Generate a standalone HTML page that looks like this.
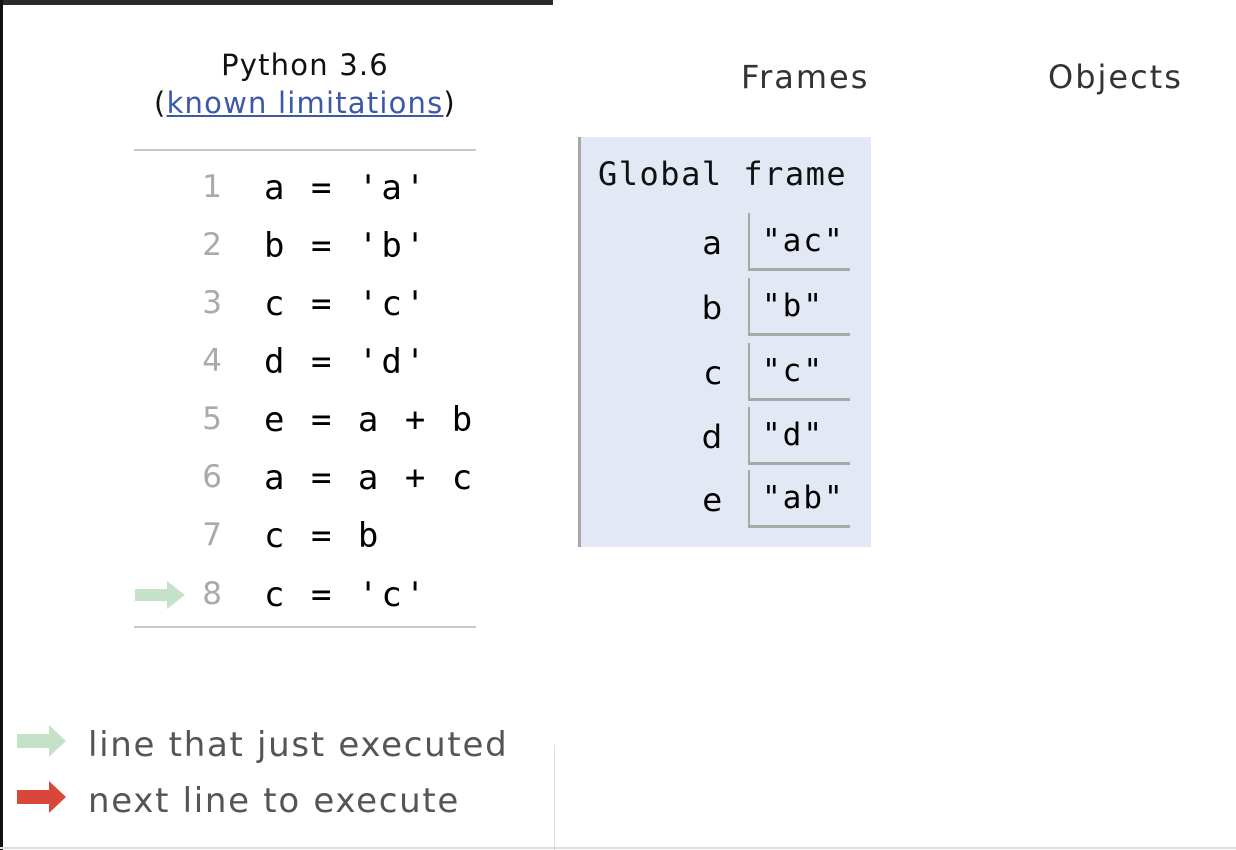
<!DOCTYPE html>
<html><head><meta charset="utf-8"><style>
body{margin:0;width:1236px;height:850px;background:#fff;position:relative;overflow:hidden;font-family:"DejaVu Sans","Liberation Sans",sans-serif}
.a{position:absolute;white-space:pre}
.mono{font-family:"DejaVu Sans Mono","Liberation Mono",monospace}
.ln{position:absolute;left:170px;width:52px;text-align:right;color:#aaa;font-size:31px;font-family:"DejaVu Sans",sans-serif}
.code{position:absolute;left:264px;font-size:34px;letter-spacing:3px;color:#000;font-family:"DejaVu Sans Mono",monospace}
.vn{position:absolute;left:660px;width:62px;text-align:right;font-size:32px;color:#000}
.vb{position:absolute;left:748px;width:102px;height:58px;border-left:2px solid #a8a8a8;border-bottom:3px solid #a8a8a8;box-sizing:border-box}
.vt{position:absolute;left:12px;top:10px;font-size:31px;letter-spacing:2px;font-family:"DejaVu Sans Mono",monospace}
</style></head><body>
<div class="a" style="left:0;top:0;width:553px;height:5px;background:#2a2a2a"></div>
<div class="a" style="left:0;top:0;width:3px;height:850px;background:#111"></div>
<div class="a" style="left:0;top:847px;width:1236px;height:2px;background:#ddd"></div>
<div class="a" style="left:554px;top:745px;width:1px;height:105px;background:#ddd"></div>

<div class="a" style="left:134px;width:342px;top:46px;text-align:center;font-size:29px;letter-spacing:1.2px;line-height:38px;color:#111">Python 3.6<br>(<span style="color:#3d58a7;text-decoration:underline">known limitations</span>)</div>
<div class="a" style="left:134px;top:149px;width:342px;height:2px;background:#c8c8c8"></div>
<div class="a" style="left:134px;top:626px;width:342px;height:2px;background:#c8c8c8"></div>

<div class="ln" style="top:169px">1</div><div class="code" style="top:168px">a = 'a'</div>
<div class="ln" style="top:227px">2</div><div class="code" style="top:226px">b = 'b'</div>
<div class="ln" style="top:285px">3</div><div class="code" style="top:284px">c = 'c'</div>
<div class="ln" style="top:343px">4</div><div class="code" style="top:342px">d = 'd'</div>
<div class="ln" style="top:401px">5</div><div class="code" style="top:400px">e = a + b</div>
<div class="ln" style="top:459px">6</div><div class="code" style="top:458px">a = a + c</div>
<div class="ln" style="top:517px">7</div><div class="code" style="top:516px">c = b</div>
<div class="ln" style="top:576px">8</div><div class="code" style="top:575px">c = 'c'</div>
<svg class="a" style="left:134px;top:581px" width="52" height="28"><path d="M1 8h32V0l18 14-18 14v-8H1z" fill="#c5e2c8"/></svg>

<div class="a" style="left:741px;top:58px;font-size:32px;letter-spacing:2px;color:#333">Frames</div>
<div class="a" style="left:1048px;top:58px;font-size:32px;letter-spacing:2px;color:#333">Objects</div>

<div class="a" style="left:578px;top:137px;width:293px;height:410px;background:#e2e9f4;border-left:3px solid #a8a8a8;box-sizing:border-box"></div>
<div class="a mono" style="left:598px;top:155px;font-size:32px;letter-spacing:1.5px;color:#111">Global frame</div>

<div class="vn" style="top:224px">a</div><div class="vb" style="top:213px"><div class="vt">"ac"</div></div>
<div class="vn" style="top:289px">b</div><div class="vb" style="top:278px"><div class="vt">"b"</div></div>
<div class="vn" style="top:354px">c</div><div class="vb" style="top:343px"><div class="vt">"c"</div></div>
<div class="vn" style="top:418px">d</div><div class="vb" style="top:407px"><div class="vt">"d"</div></div>
<div class="vn" style="top:481px">e</div><div class="vb" style="top:470px"><div class="vt">"ab"</div></div>

<svg class="a" style="left:17px;top:725px" width="50" height="32"><path d="M0 9h32V0l17 16-17 16v-9H0z" fill="#c5e2c8"/></svg>
<svg class="a" style="left:17px;top:781px" width="50" height="32"><path d="M0 9h32V0l17 16-17 16v-9H0z" fill="#d9473a"/></svg>
<div class="a" style="left:88px;top:725px;font-size:34px;letter-spacing:1.7px;color:#555">line that just executed</div>
<div class="a" style="left:88px;top:781px;font-size:34px;letter-spacing:1.7px;color:#555">next line to execute</div>
</body></html>
